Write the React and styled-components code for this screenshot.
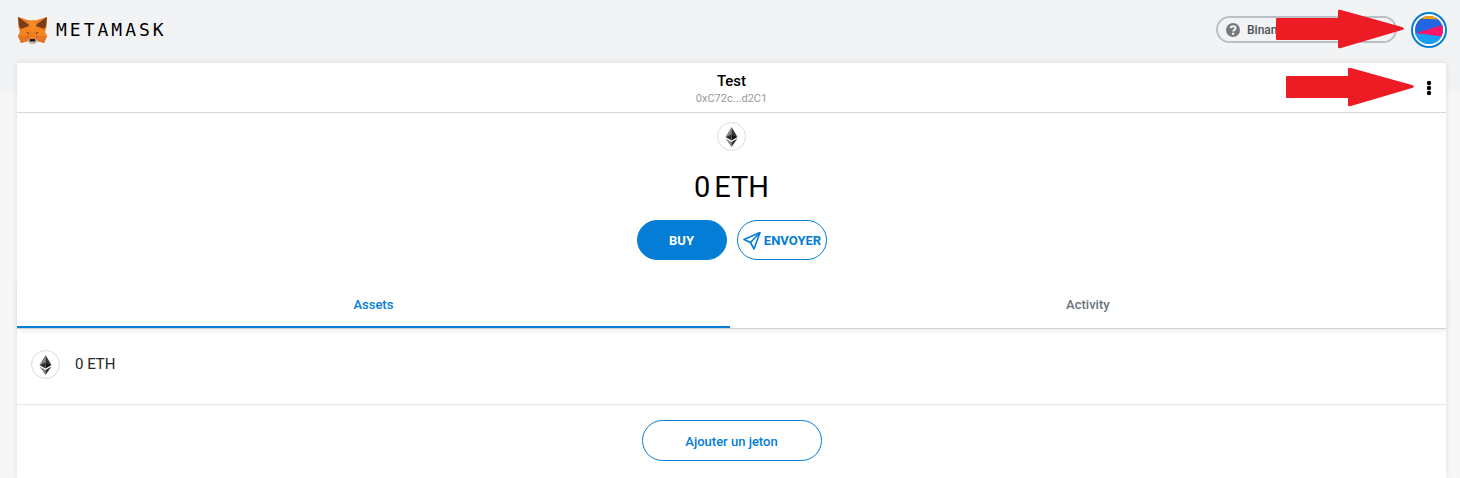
import React from "react";
import styled, { createGlobalStyle } from "styled-components";

const blue = "#037dd6";

const GlobalStyle = createGlobalStyle`
  *, *::before, *::after { box-sizing: border-box; }
  body {
    margin: 0;
    min-height: 100vh;
    background: linear-gradient(#f2f3f4 92px, #f7f7f7 92px) no-repeat #f7f7f7;
    font-family: Roboto, "Liberation Sans", sans-serif;
    color: #000;
  }
  #root { display: flex; flex-direction: column; min-height: 100vh; }
  button { font-family: inherit; cursor: pointer; }
`;

const Header = styled.header`
  display: flex;
  align-items: center;
  justify-content: space-between;
  height: 63px;
  padding: 0 13px 4px 17px;
`;

const Brand = styled.a`
  display: flex;
  align-items: center;
  gap: 8px;
  color: #000;
  text-decoration: none;
`;

const Wordmark = styled.span`
  font-family: "DejaVu Sans Mono", monospace;
  font-size: 18px;
  line-height: 24px;
  letter-spacing: 3px;
`;

const Account = styled.div`
  position: relative;
  display: flex;
  align-items: center;
  gap: 14px;
`;

const Network = styled.button`
  display: flex;
  align-items: center;
  gap: 7px;
  width: 181px;
  height: 27px;
  padding: 0 8px;
  border: 2px solid #bbc0c5;
  border-radius: 14px;
  background: transparent;
  color: #4d5156;
  font-size: 12px;
  line-height: 16px;
  font-weight: 500;
  white-space: nowrap;
`;

const AvatarButton = styled.button`
  display: flex;
  align-items: center;
  justify-content: center;
  width: 36px;
  height: 36px;
  padding: 0;
  border: 2px solid ${blue};
  border-radius: 50%;
  background: #fff;
`;

const Arrow = styled.svg`
  position: absolute;
  top: ${(p) => p.$top}px;
  right: ${(p) => p.$right}px;
  width: 129px;
  height: 41px;
  pointer-events: none;
`;

const Panel = styled.main`
  flex: 1;
  display: flex;
  flex-direction: column;
  margin: 0 14px 0 17px;
  background: #fff;
  box-shadow: 0 0 7px rgba(0, 0, 0, 0.1);
`;

const MenuBar = styled.div`
  position: relative;
  display: flex;
  flex-direction: column;
  align-items: center;
  height: 50px;
  padding-top: 8px;
  border-bottom: 1px solid #d8d8d8;
`;

const AccountName = styled.h1`
  margin: 0;
  font-size: 15px;
  line-height: 20px;
  font-weight: 500;
`;

const Address = styled.span`
  color: #989a9b;
  font-size: 11px;
  line-height: 16px;
`;

const Options = styled.button`
  position: absolute;
  top: 15px;
  right: 7px;
  display: flex;
  justify-content: center;
  width: 20px;
  height: 20px;
  padding: 0;
  border: 0;
  background: none;
`;

const Overview = styled.section`
  display: flex;
  flex-direction: column;
  align-items: center;
  height: 167px;
  padding-top: 9px;
`;

const TokenBadge = styled.span`
  display: flex;
  align-items: center;
  justify-content: center;
  width: 29px;
  height: 29px;
  border: 1px solid #dcdcdc;
  border-radius: 50%;
  background: #fff;
`;

const Balance = styled.div`
  display: flex;
  gap: 4px;
  margin: 18px 0 15px;
  font-size: 29px;
  line-height: 36px;
`;

const Actions = styled.div`
  display: flex;
  gap: 10px;
`;

const PillButton = styled.button`
  display: flex;
  align-items: center;
  justify-content: center;
  gap: 3px;
  width: ${(p) => (p.$wide ? 180 : 90)}px;
  height: ${(p) => (p.$wide ? 41 : 40)}px;
  padding: 2px 0 0;
  border: 1px solid ${blue};
  border-radius: 21px;
  background: ${(p) => (p.$filled ? blue : "#fff")};
  color: ${(p) => (p.$filled ? "#fff" : blue)};
  font-size: 13px;
  line-height: 18px;
  font-weight: ${(p) => (p.$wide ? 500 : 700)};
`;

const Tabs = styled.div`
  display: flex;
  height: 49px;
  border-bottom: 1px solid #d2d2d2;
  box-shadow: 0 3px 5px rgba(0, 0, 0, 0.06);
`;

const Tab = styled.button`
  flex: 1 1 auto;
  padding: 4px 0 0;
  border: 0;
  border-bottom: 2px solid ${(p) => (p.$active ? blue : "transparent")};
  background: none;
  color: ${(p) => (p.$active ? blue : "#6a737d")};
  font-size: 13px;
  line-height: 18px;
  font-weight: 500;
`;

const AssetRow = styled.div`
  display: flex;
  align-items: center;
  gap: 15px;
  height: 76px;
  padding: 0 14px 4px;
  border-bottom: 1px solid #e6e6e6;
  color: #24292e;
`;

const AssetAmount = styled.span`
  padding-bottom: 2px;
  font-size: 15px;
  line-height: 20px;
`;

const Footer = styled.div`
  display: flex;
  justify-content: center;
  padding: 15px 0;
`;

function Fox() {
  return (
    <svg width="31" height="28" viewBox="0 0 31 28" aria-hidden="true">
      <path d="M1 1L12 4.500H19L30 1L29.500 11L28 16L30 20L27 27L20 25L18 27H13L11 25L4 27L1 20L3 16L1.500 11Z" fill="#f07d20" />
      <path d="M12 4.500H19L18 13L15.500 17L13 13Z" fill="#f68b25" />
      <path d="M1 1L13 5L11 10Z M30 1L18 5L20 10Z" fill="#e8812c" />
      <path d="M1 1L11 8L12 10L4 13L2 10Z M30 1L20 8L19 10L27 13L29 10Z" fill="#763d16" />
      <path d="M5 13L12 11L13 18L9 20L1 20Z M26 13L19 11L18 18L22 20L30 20Z" fill="#f58320" />
      <path d="M1 20H9L11 25L4 27Z M30 20H22L20 25L27 27Z" fill="#e37524" />
      <path d="M9 16L12 16.500L12 18.500Z M22 16L19 16.500L19 18.500Z" fill="#6d4630" />
      <path d="M9 20L12 19.500L12 23Z M22 20L19 19.500L19 23Z" fill="#d9691a" />
      <path d="M10.500 24.500L13 23H18L20.500 24.500L18 28H13Z" fill="#c7b8a9" />
      <path d="M13 23H18L18.500 25.500H12.500Z" fill="#161616" />
    </svg>
  );
}

function Question() {
  return (
    <svg width="14" height="14" viewBox="0 0 14 14" aria-hidden="true">
      <circle cx="7" cy="7" r="7" fill="#77797c" />
      <path d="M4.600 5.200C4.900 2.700 9.500 2.700 9.500 5.400C9.500 7 7.100 6.900 7.100 8.600" fill="none" stroke="#f2f3f4" strokeWidth="2" />
      <circle cx="7.100" cy="10.700" r="1.200" fill="#f2f3f4" />
    </svg>
  );
}

function Identicon() {
  return (
    <svg width="28" height="28" viewBox="0 0 28 28" aria-hidden="true">
      <clipPath id="avatar"><circle cx="14" cy="14" r="14" /></clipPath>
      <g clipPath="url(#avatar)">
        <path d="M0 0H28V28H0Z" fill="#2465e1" />
        <path d="M0 0H28V3.500L0 2.500Z" fill="#f5a000" />
        <path d="M0 17L28 20V28H0Z" fill="#189df2" />
        <path d="M1 17L28 9V20.500Z" fill="#fb1467" />
      </g>
    </svg>
  );
}

function Ether() {
  return (
    <svg width="13" height="20" viewBox="0 0 13 20" aria-hidden="true">
      <path d="M6.500 0L0.500 10L6.500 7.500Z" fill="#828384" />
      <path d="M6.500 0L12.500 10L6.500 7.500Z" fill="#343434" />
      <path d="M0.500 10L6.500 7.300V13.500Z" fill="#2f3030" />
      <path d="M12.500 10L6.500 7.300V13.500Z" fill="#131313" />
      <path d="M0.500 11.500L6.500 15V20Z" fill="#828384" />
      <path d="M12.500 11.500L6.500 15V20Z" fill="#2f3030" />
    </svg>
  );
}

function Plane() {
  return (
    <svg width="19" height="20" viewBox="0 0 19 20" fill="none" stroke={blue} strokeWidth="1.600" strokeLinejoin="round" aria-hidden="true">
      <path d="M18 1.500L2 8.500L8.500 11.500L12 18Z" />
      <path d="M18 1.500L8.500 11.500" />
    </svg>
  );
}

function PointerArrow({ top, right }) {
  return (
    <Arrow $top={top} $right={right} viewBox="0 0 129 41" aria-hidden="true">
      <path d="M1 9H62V2Q62 0 65 1L126 18Q130 20 126 21L65 39Q62 40 62 38V31H1Q0 31 0 30V10Q0 9 1 9Z" fill="#ed1c24" />
    </Arrow>
  );
}

export default function App() {
  return (
    <>
      <GlobalStyle />
      <Header>
        <Brand href="#">
          <Fox />
          <Wordmark>METAMASK</Wordmark>
        </Brand>
        <Account>
          <Network type="button">
            <Question />
            Binance Smart Chain
          </Network>
          <AvatarButton type="button" aria-label="Account">
            <Identicon />
          </AvatarButton>
          <PointerArrow top={-3} right={42} />
        </Account>
      </Header>
      <Panel>
        <MenuBar>
          <AccountName>Test</AccountName>
          <Address>0xC72c...d2C1</Address>
          <Options type="button" aria-label="Account options">
            <svg width="6" height="20" viewBox="0 0 6 20" aria-hidden="true">
              <circle cx="3" cy="5" r="2.200" />
              <circle cx="3" cy="10" r="2.200" />
              <circle cx="3" cy="15" r="2.200" />
            </svg>
          </Options>
          <PointerArrow top={4} right={31} />
        </MenuBar>
        <Overview>
          <TokenBadge><Ether /></TokenBadge>
          <Balance>
            <span>0</span>
            <span>ETH</span>
          </Balance>
          <Actions>
            <PillButton type="button" $filled>BUY</PillButton>
            <PillButton type="button"><Plane />ENVOYER</PillButton>
          </Actions>
        </Overview>
        <Tabs role="tablist">
          <Tab type="button" role="tab" aria-selected="true" $active>Assets</Tab>
          <Tab type="button" role="tab" aria-selected="false">Activity</Tab>
        </Tabs>
        <AssetRow>
          <TokenBadge><Ether /></TokenBadge>
          <AssetAmount>0 ETH</AssetAmount>
        </AssetRow>
        <Footer>
          <PillButton type="button" $wide>Ajouter un jeton</PillButton>
        </Footer>
      </Panel>
    </>
  );
}
